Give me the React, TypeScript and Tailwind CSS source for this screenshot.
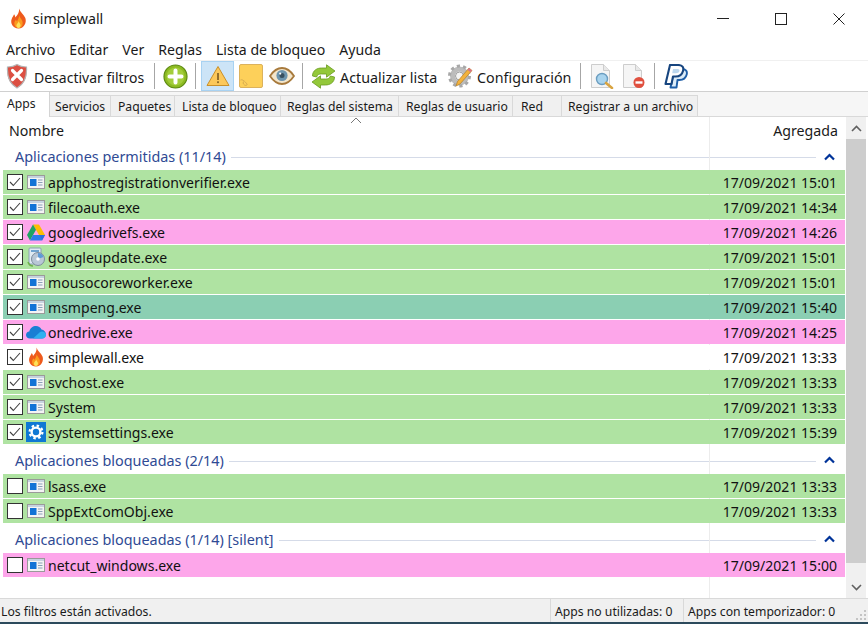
import type { ReactNode } from "react"

const FlameIcon = ({ size = 20 }: { size?: number }) => (
  <svg width={size} height={size} viewBox="0 0 20 20">
    <path d="M10.5 0.5C11.5 4 15 6 16.5 9.5C18 13.5 15.5 19.5 10 19.5C4.5 19.5 2 14.5 3.5 10.5C4.2 8.5 5.3 7.4 5.8 6C6.6 7 6.9 8 7 9C8.8 6.8 11 4.5 10.5 0.5Z" fill="#ee5a1c" />
    <path d="M10.6 7C11 9.5 14 11 14 14.5C14 17.3 12.3 19 10 19C7.7 19 6 17.3 6 14.8C6 13.2 6.9 12 7.6 11.2C7.9 12 8.2 12.5 8.6 12.8C9.3 11 10.8 9.5 10.6 7Z" fill="#fb9a1e" />
    <path d="M10.2 12.5C10.5 14 12 14.8 12 16.5C12 18 11.1 19 10 19C8.9 19 8 18 8 16.7C8 15 9.8 14.2 10.2 12.5Z" fill="#fde25a" />
  </svg>
)

const ShieldIcon = () => (
  <svg width="22" height="26" viewBox="0 0 22 26">
    <path d="M11 1.5C14 3.4 17 4 20.5 4C21 12 20 20 11 25C2 20 1 12 1.5 4C5 4 8 3.4 11 1.5Z" fill="#dc4f42" stroke="#b4b4b4" strokeWidth="1.2" />
    <path d="M6.5 7.5L15.5 16.5M15.5 7.5L6.5 16.5" stroke="#fff" strokeWidth="3.2" strokeLinecap="round" />
  </svg>
)

const PlusIcon = () => (
  <svg width="25" height="25" viewBox="0 0 25 25">
    <circle cx="12.5" cy="12.5" r="11.5" fill="#8dbb22" stroke="#5d8a12" strokeWidth="1.2" />
    <circle cx="12.5" cy="12.5" r="9" fill="#a3cd3b" />
    <path d="M6.5 12.5H18.5M12.5 6.5V18.5" stroke="#fff" strokeWidth="4" strokeLinecap="round" />
  </svg>
)

const WarningIcon = () => (
  <svg width="24" height="22" viewBox="0 0 24 22">
    <path d="M12 1.5L23 20.5H1Z" fill="#fcc85a" stroke="#c9902a" strokeWidth="1" strokeLinejoin="round" />
    <rect x="11.2" y="8" width="1.6" height="7" fill="#7a5a20" />
    <rect x="11.2" y="16.3" width="1.6" height="1.8" fill="#7a5a20" />
  </svg>
)

const NoteIcon = () => (
  <svg width="24" height="24" viewBox="0 0 24 24">
    <rect x="0.5" y="0.5" width="23" height="23" rx="1.5" fill="#fdd05a" stroke="#dcb25c" />
    <path d="M1.5 16C3.5 15 6 17.5 8 20C8.5 21 7 22 5.5 21C4 20 3.5 18 5 17.5" fill="none" stroke="#d2a850" strokeWidth="0.9" />
  </svg>
)

const EyeIcon = () => (
  <svg width="26" height="18" viewBox="0 0 26 18">
    <path d="M1 9C5 3 9 1 13 1C17 1 21 3 25 9C21 15 17 17 13 17C9 17 5 15 1 9Z" fill="#f3e6cc" stroke="#a87a3c" strokeWidth="1.8" />
    <circle cx="13" cy="8.5" r="5.6" fill="#6d95ad" />
    <circle cx="13" cy="8.5" r="2.5" fill="#37505f" />
    <circle cx="11.2" cy="6.6" r="1.1" fill="#fff" />
  </svg>
)

const RefreshIcon = () => (
  <svg width="25" height="25" viewBox="0 0 25 25">
    <path d="M1.5 12C1.5 6.5 6 4 10.5 4H15.5V0.8L24 7L15.5 13.2V10H10.5C8 10 6.5 10.5 5.6 13Z" fill="#93c83a" stroke="#6a9a20" strokeWidth="0.8" strokeLinejoin="round" />
    <path d="M23.5 13C23.5 18.5 19 21 14.5 21H9.5V24.2L1 18L9.5 11.8V15H14.5C17 15 18.5 14.5 19.4 12Z" fill="#93c83a" stroke="#6a9a20" strokeWidth="0.8" strokeLinejoin="round" />
  </svg>
)

const GearPencilIcon = () => (
  <svg width="25" height="25" viewBox="0 0 25 25">
    <circle cx="11.5" cy="12" r="7" fill="none" stroke="#bcbcbc" strokeWidth="5" />
    <circle cx="11.5" cy="12" r="10" fill="none" stroke="#a8a8a8" strokeWidth="3" strokeDasharray="3.2 3.1" />
    <circle cx="11.5" cy="12" r="4" fill="#f4f4f4" stroke="#9c9c9c" />
    <path d="M21 4L24 6.5L12 20L8 22L9.5 17.5Z" fill="#f3b23c" stroke="#b57f25" strokeWidth="0.7" />
    <path d="M21 4L24 6.5L22.5 8.2L19.5 5.7Z" fill="#d9738a" />
  </svg>
)

const DocBase = () => (
  <>
    <path d="M1.5 0.5H13.5L19.5 6.5V23.5H1.5Z" fill="#f5f5f5" stroke="#cdcdcd" />
    <path d="M13.5 0.5V6.5H19.5" fill="#e8e8e8" stroke="#cdcdcd" />
  </>
)

const DocSearchIcon = () => (
  <svg width="24" height="25" viewBox="0 0 24 25">
    <DocBase />
    <circle cx="12" cy="15" r="5.5" fill="#a9d4ee" stroke="#6b9dc0" strokeWidth="1.4" />
    <path d="M16 19L22 24" stroke="#d9a441" strokeWidth="2.6" strokeLinecap="round" />
  </svg>
)

const DocBlockIcon = () => (
  <svg width="24" height="25" viewBox="0 0 24 25">
    <DocBase />
    <circle cx="17" cy="18.5" r="5.5" fill="#e0503f" />
    <rect x="13.5" y="17.3" width="7" height="2.4" fill="#fff" />
  </svg>
)

const PaypalIcon = () => (
  <svg width="24" height="25" viewBox="0 0 24 25">
    <path d="M10.5 5H18C22 5 23.5 7.5 22.7 10.5C21.8 14 19 16 15.5 16H13.5L12.5 23.5H6.5Z" fill="#dcecf8" stroke="#1f5fa8" strokeWidth="1.9" strokeLinejoin="round" />
    <path d="M6 1H14C18.5 1 20 3.5 19 7C18 11 15 12.5 11.5 12.5H9L7.5 20H1.5Z" fill="#fff" stroke="#17457f" strokeWidth="2.1" strokeLinejoin="round" />
    <path d="M9 5H13.5C15.5 5 15.8 6.2 15.3 7.5C14.8 8.8 13.5 9.2 12 9.2H8.2Z" fill="#bcd7ee" />
  </svg>
)

const AppIcon = () => (
  <svg width="18" height="14" viewBox="0 0 18 14">
    <rect x="0.5" y="0.5" width="17" height="13" fill="#f4f4f4" stroke="#9a9a9a" />
    <rect x="1" y="1" width="16" height="2" fill="#c6d3e0" />
    <rect x="3" y="4" width="6.5" height="7" fill="#1273d6" />
    <path d="M11 5H15.5M11 7.5H15.5M11 10H15.5" stroke="#8aa0b8" strokeWidth="1" />
  </svg>
)

const DriveIcon = () => (
  <svg width="18" height="17" viewBox="0 0 18 17">
    <path d="M6 0.5H12L18 11H12Z" fill="#fbbc04" />
    <path d="M6 0.5L9 5.7L3 16.5L0 11Z" fill="#1fa463" />
    <path d="M6 11H18L15 16.5H3Z" fill="#2b7de9" />
    <path d="M12.5 11H18L15 16.5H15.5Z" fill="#2b6fe0" />
  </svg>
)

const UpdateIcon = () => (
  <svg width="18" height="20" viewBox="0 0 18 20">
    <rect x="2" y="1" width="12" height="16" rx="1" fill="#dfeaf3" stroke="#8ba0b4" />
    <path d="M4 4H12" stroke="#6fa3cf" strokeWidth="2" />
    <circle cx="11" cy="12" r="6.5" fill="#b9c7d6" stroke="#7d8c9c" />
    <path d="M11 12L11 6A6 6 0 0 1 16.5 10Z" fill="#5d9ad6" />
    <circle cx="11" cy="12" r="1.8" fill="#fff" />
    <path d="M1 15C2 18 4 19 6 19" stroke="#6fb04a" strokeWidth="1.5" fill="none" />
  </svg>
)

const OneDriveIcon = () => (
  <svg width="20" height="14" viewBox="0 0 20 14">
    <path d="M4 13.5C1.5 13.5 0 11.8 0 10C0 8 1.5 6.7 3.3 6.5C4 3 7 1 10 1C12.5 1 14.5 2.5 15.5 4.5C18 4.8 20 7 20 9.5C20 11.8 18.2 13.5 16 13.5Z" fill="#1a7fd4" />
    <path d="M7 13.5L13.5 7.5C15 6 17 6.2 18.5 7.2C19.5 8 20 9 20 10C20 12 18.3 13.5 16 13.5Z" fill="#2fb0ef" />
  </svg>
)

const SettingsIcon = () => (
  <svg width="20" height="20" viewBox="0 0 20 20">
    <rect width="20" height="20" fill="#0f78d4" />
    <circle cx="10" cy="10" r="4.4" fill="none" stroke="#fff" strokeWidth="2.4" />
    <circle cx="10" cy="10" r="6.4" fill="none" stroke="#fff" strokeWidth="2.2" strokeDasharray="2.5 2.5" />
  </svg>
)

const Separator = () => <div className="mx-[5px] h-[26px] w-px bg-[#a6a6a6]" />

const ToolButton = ({ width, active, children }: { width: number; active?: boolean; children: ReactNode }) => (
  <div
    className={
      active
        ? "flex h-[30px] items-center justify-center border border-[#a8d2f2] bg-[#cce4f7]"
        : "flex h-[30px] items-center justify-center"
    }
    style={{ width }}
  >
    {children}
  </div>
)

const tabs = [
  { label: "Servicios", width: 61, inset: 5 },
  { label: "Paquetes", width: 64, inset: 7 },
  { label: "Lista de bloqueo", width: 106, inset: 7 },
  { label: "Reglas del sistema", width: 118, inset: 6 },
  { label: "Reglas de usuario", width: 114, inset: 7 },
  { label: "Red", width: 49, inset: 8 },
  { label: "Registrar a un archivo", width: 136, inset: 6 },
]

type Row = { name: string; date: string; color: string; checked: boolean; icon: ReactNode }

const green = "bg-[#afe3a2]"
const pink = "bg-[#fda6ea]"
const teal = "bg-[#8bcfb3]"

const allowed: Row[] = [
  { name: "apphostregistrationverifier.exe", date: "17/09/2021 15:01", color: green, checked: true, icon: <AppIcon /> },
  { name: "filecoauth.exe", date: "17/09/2021 14:34", color: green, checked: true, icon: <AppIcon /> },
  { name: "googledrivefs.exe", date: "17/09/2021 14:26", color: pink, checked: true, icon: <DriveIcon /> },
  { name: "googleupdate.exe", date: "17/09/2021 15:01", color: green, checked: true, icon: <UpdateIcon /> },
  { name: "mousocoreworker.exe", date: "17/09/2021 15:01", color: green, checked: true, icon: <AppIcon /> },
  { name: "msmpeng.exe", date: "17/09/2021 15:40", color: teal, checked: true, icon: <AppIcon /> },
  { name: "onedrive.exe", date: "17/09/2021 14:25", color: pink, checked: true, icon: <OneDriveIcon /> },
  { name: "simplewall.exe", date: "17/09/2021 13:33", color: "bg-white", checked: true, icon: <FlameIcon /> },
  { name: "svchost.exe", date: "17/09/2021 13:33", color: green, checked: true, icon: <AppIcon /> },
  { name: "System", date: "17/09/2021 13:33", color: green, checked: true, icon: <AppIcon /> },
  { name: "systemsettings.exe", date: "17/09/2021 15:39", color: green, checked: true, icon: <SettingsIcon /> },
]

const blocked: Row[] = [
  { name: "lsass.exe", date: "17/09/2021 13:33", color: green, checked: false, icon: <AppIcon /> },
  { name: "SppExtComObj.exe", date: "17/09/2021 13:33", color: green, checked: false, icon: <AppIcon /> },
]

const silent: Row[] = [
  { name: "netcut_windows.exe", date: "17/09/2021 15:00", color: pink, checked: false, icon: <AppIcon /> },
]

const AppRow = ({ row }: { row: Row }) => (
  <div className={`relative mb-px flex h-6 items-center pl-1 pr-2 ${row.color}`}>
    <div className="flex h-[16px] w-[16px] items-center justify-center border border-[#333] bg-white">
      {row.checked && (
        <svg width="12" height="10" viewBox="0 0 12 10">
          <path d="M1 5L4.3 8.5L11 1" fill="none" stroke="#404040" strokeWidth="1.1" />
        </svg>
      )}
    </div>
    <div className="ml-[3px] flex w-[20px] items-center justify-center">{row.icon}</div>
    <span className="ml-[2px] flex-1 pt-[2px] text-[14.05px] leading-none text-[#111]">{row.name}</span>
    <span className="pt-[2px] text-[14.05px] leading-none text-[#111]">{row.date}</span>
  </div>
)

const Group = ({ title, first, rows }: { title: string; first?: boolean; rows: Row[] }) => (
  <div>
    <div className={first ? "flex h-[25px] items-center pl-3 pr-[10px]" : "flex h-[29px] items-center pl-3 pr-[10px] pt-[3px]"}>
      <span className="text-[14.4px] leading-none text-[#2f4a94]">{title}</span>
      <div className="ml-[5px] h-px flex-1 bg-[#d5dbe8]" />
      <svg className="mb-[2px] ml-2" width="11" height="8" viewBox="0 0 11 8">
        <path d="M1 6.5L5.5 2L10 6.5" fill="none" stroke="#003399" strokeWidth="2.2" />
      </svg>
    </div>
    {rows.map((row) => (
      <AppRow key={row.name} row={row} />
    ))}
  </div>
)

export default function App() {
  return (
    <div className="flex h-[624px] w-[868px] flex-col overflow-hidden bg-white font-['Noto_Sans',sans-serif] text-[#1a1a1a]">
      <div className="flex h-[37px] items-center pl-[8px]">
        <FlameIcon size={21} />
        <span className="ml-[4px] text-[14.2px]">simplewall</span>
        <div className="ml-auto flex items-center">
          <div className="flex h-[37px] w-[58px] items-center justify-center">
            <div className="h-px w-3 bg-[#222]" />
          </div>
          <div className="flex h-[37px] w-[58px] items-center justify-center">
            <div className="h-3 w-3 border border-[#222]" />
          </div>
          <div className="flex h-[37px] w-[58px] items-center justify-center">
            <svg width="12" height="12" viewBox="0 0 12 12">
              <path d="M0.5 0.5L11.5 11.5M11.5 0.5L0.5 11.5" stroke="#222" strokeWidth="1" />
            </svg>
          </div>
        </div>
      </div>

      <div className="flex h-[24px] items-center gap-[14px] border-b border-[#f0f0f0] pl-[6px] pt-[4px] text-[14.1px] leading-none">
        <span>Archivo</span>
        <span>Editar</span>
        <span>Ver</span>
        <span>Reglas</span>
        <span>Lista de bloqueo</span>
        <span>Ayuda</span>
      </div>

      <div className="flex h-[31px] items-center border-b border-[#d0d0d0] pl-[5px] text-[14.3px]">
        <ToolButton width={23}>
          <ShieldIcon />
        </ToolButton>
        <span className="ml-[6px] w-[115px] pt-[3px] text-[14px]">Desactivar filtros</span>
        <Separator />
        <ToolButton width={30}>
          <PlusIcon />
        </ToolButton>
        <Separator />
        <ToolButton width={33} active>
          <WarningIcon />
        </ToolButton>
        <ToolButton width={33}>
          <NoteIcon />
        </ToolButton>
        <ToolButton width={30}>
          <EyeIcon />
        </ToolButton>
        <Separator />
        <ToolButton width={30}>
          <RefreshIcon />
        </ToolButton>
        <span className="ml-[2px] w-[107px] pt-[3px]">Actualizar lista</span>
        <ToolButton width={26}>
          <GearPencilIcon />
        </ToolButton>
        <span className="ml-[4px] w-[98px] pt-[3px]">Configuración</span>
        <Separator />
        <ToolButton width={32}>
          <DocSearchIcon />
        </ToolButton>
        <ToolButton width={31}>
          <DocBlockIcon />
        </ToolButton>
        <Separator />
        <ToolButton width={32}>
          <PaypalIcon />
        </ToolButton>
      </div>

      <div className="relative flex h-[25px] items-end bg-[#f6f6f6] text-[12.2px] leading-none">
        <div className="z-10 flex h-[25px] w-[50px] items-start border-r border-[#d4d4d4] bg-white pl-[7px] pt-[6px]">Apps</div>
        {tabs.map((tab) => (
          <div
            key={tab.label}
            className="flex h-[22px] items-center border-b border-r border-t border-[#d9d9d9] bg-[#f0f0f0] pt-[2px]"
            style={{ width: tab.width, paddingLeft: tab.inset }}
          >
            {tab.label}
          </div>
        ))}
        <div className="h-[1px] flex-1 bg-[#d9d9d9]" />
      </div>

      <div className="relative flex flex-1 overflow-hidden">
        <div className="relative w-[846px] pl-[3px] pr-px">
          <div className="absolute bottom-0 left-[709px] top-0 w-px bg-[#ececec]" />
          <svg className="absolute left-[350px] top-0" width="12" height="7" viewBox="0 0 12 7">
            <path d="M1 6L6 1L11 6" fill="none" stroke="#777" strokeWidth="1" />
          </svg>
          <div className="flex h-[28px] items-center justify-between pl-[6px] pr-[7px] pt-px text-[14.2px] leading-none">
            <span>Nombre</span>
            <span>Agregada</span>
          </div>
          <Group title="Aplicaciones permitidas (11/14)" first rows={allowed} />
          <Group title="Aplicaciones bloqueadas (2/14)" rows={blocked} />
          <Group title="Aplicaciones bloqueadas (1/14) [silent]" rows={silent} />
        </div>
        <div className="flex w-[20px] flex-col items-center bg-[#f0f0f0]">
          <div className="flex h-[22px] items-center justify-center">
            <svg width="11" height="7" viewBox="0 0 11 7">
              <path d="M1 6L5.5 1.5L10 6" fill="none" stroke="#606060" strokeWidth="1.6" />
            </svg>
          </div>
          <div className="h-[424px] w-full bg-[#cdcdcd]" />
          <div className="mt-auto flex h-[22px] items-center justify-center">
            <svg width="11" height="7" viewBox="0 0 11 7">
              <path d="M1 1L5.5 5.5L10 1" fill="none" stroke="#606060" strokeWidth="1.6" />
            </svg>
          </div>
        </div>
      </div>

      <div className="flex h-[24px] items-center border-t border-[#d9d9d9] bg-[#f0f0f0] text-[12.2px] leading-none">
        <span className="w-[550px] pl-px pt-[4px]">Los filtros están activados.</span>
        <span className="flex h-full w-[133px] items-center border-l border-[#d9d9d9] pl-[4px] pt-[4px]">Apps no utilizadas: 0</span>
        <span className="flex h-full w-[163px] items-center border-l border-[#d9d9d9] pl-[4px] pt-[4px]">Apps con temporizador: 0</span>
        <div className="flex h-full flex-1 items-end justify-end pb-px pr-px">
          <svg width="12" height="12" viewBox="0 0 12 12">
            <path d="M9 1h2v2H9zM5 5h2v2H5zM9 5h2v2H9zM1 9h2v2H1zM5 9h2v2H5zM9 9h2v2H9z" fill="#c4c4c4" />
          </svg>
        </div>
      </div>
      <div className="h-[2px] bg-[#2c4a5c]" />
    </div>
  )
}
